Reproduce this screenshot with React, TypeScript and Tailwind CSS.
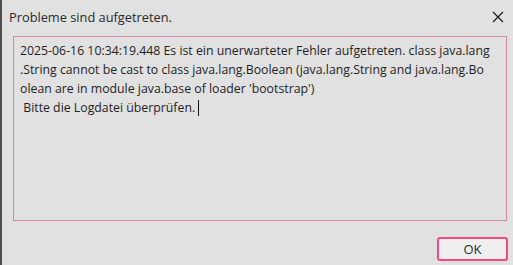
export default function App() {
  const lines = [
    "2025-06-16 10:34:19.448 Es ist ein unerwarteter Fehler aufgetreten. class java.lang",
    ".String cannot be cast to class java.lang.Boolean (java.lang.String and java.lang.Bo",
    "olean are in module java.base of loader 'bootstrap')",
  ];

  return (
    <div
      className="flex h-[265px] w-[513px] bg-[#e1e1e1] text-[#1e1e1e]"
      style={{ fontFamily: '"Open Sans", "Noto Sans", sans-serif' }}
    >
      <div className="w-[2px] shrink-0 bg-[#4d4d4d]" />
      <div className="flex min-w-0 flex-1 flex-col">
        <div className="flex h-[34px] items-center justify-between pl-[7px] pr-[9px]">
          <span className="text-[12.8px] leading-none text-[#2a2a2a]">Probleme sind aufgetreten.</span>
          <svg width="12" height="12" viewBox="0 0 12 12" className="mb-[1px]">
            <path d="M1 1 L11 11 M11 1 L1 11" stroke="#1a1a1a" strokeWidth="1.2" />
          </svg>
        </div>
        <div className="ml-[11px] mr-[6px] mt-[2px] h-[185px] border border-[#d98aa2] px-[6px] pt-[4px] text-[12.3px] leading-[19px] text-[#1f1f1f]">
          {lines.map((line) => (
            <div key={line} className="whitespace-pre">
              {line}
            </div>
          ))}
          <div className="flex items-center whitespace-pre">
            {" Bitte die Logdatei überprüfen."}
            <span className="ml-[3px] inline-block h-[16px] w-[1px] bg-[#111]" />
          </div>
        </div>
        <div className="flex flex-1 items-start justify-end pr-[5px] pt-[16px]">
          <button className="h-[24px] w-[71px] rounded-[3px] border-2 border-[#ef4a7f] bg-[#efefef] text-[13px] leading-none text-[#1f2a33]">
            OK
          </button>
        </div>
      </div>
    </div>
  );
}
